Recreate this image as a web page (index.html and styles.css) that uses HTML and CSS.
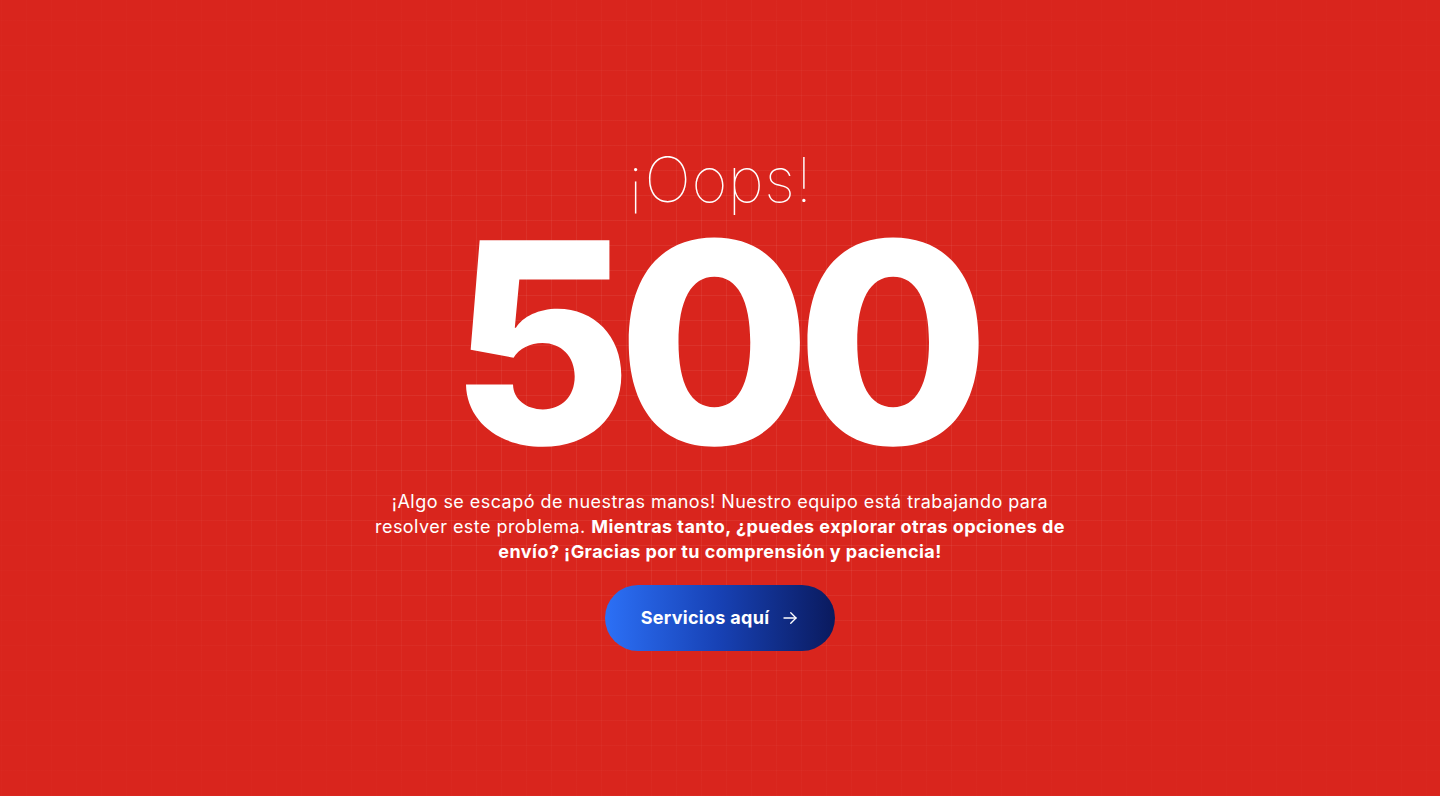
FILE: index.html
```html
<!DOCTYPE html>
<html lang="es">
<head>
<meta charset="utf-8">
<title>Error 500</title>
<link rel="stylesheet" href="styles.css">
</head>
<body>
<main class="page">
  <section class="content">
    <p class="oops">¡Oops!</p>
    <h1 class="code">500</h1>
    <p class="message">¡Algo se escapó de nuestras manos! Nuestro equipo está trabajando para resolver este problema. <strong>Mientras tanto, ¿puedes explorar otras opciones de envío? ¡Gracias por tu comprensión y paciencia!</strong></p>
    <a class="btn" href="#">Servicios aquí
      <svg class="btn-icon" width="18" height="18" viewBox="0 0 24 24" fill="none" stroke="currentColor" stroke-width="1.8" stroke-linecap="round" stroke-linejoin="round"><path d="M4 12h16"/><path d="M13 5l7 7-7 7"/></svg>
    </a>
  </section>
</main>
</body>
</html>
```
FILE: styles.css
```css
* { box-sizing: border-box; }
html, body { margin: 0; padding: 0; height: 100%; }
body {
  font-family: "Inter", "Noto Sans", sans-serif;
  color: #fff;
  background-color: #d9251d;
  background-image:
    radial-gradient(ellipse 50% 55% at 50% 50%, rgba(217,37,29,0) 40%, rgba(217,37,29,0.85) 100%),
    linear-gradient(to right, rgba(255,255,255,0.06) 1px, transparent 1px),
    linear-gradient(to bottom, rgba(255,255,255,0.06) 1px, transparent 1px);
  background-size: 100% 100%, 25px 25px, 25px 25px;
  background-position: 0 0, 1px 20px, 1px 20px;
}
.page {
  min-height: 796px;
  display: flex;
  align-items: center;
  justify-content: center;
  padding-top: 5px;
}
.content {
  display: flex;
  flex-direction: column;
  align-items: center;
  text-align: center;
}
.oops {
  margin: 0;
  font-weight: 100;
  font-size: 62px;
  line-height: 58px;
  letter-spacing: 0.5px;
}
.code {
  margin: 9px 0 0;
  font-weight: 800;
  font-size: 280px;
  line-height: 250px;
  letter-spacing: -15px;
  text-indent: -15px;
}
.message {
  margin: 21px 0 0;
  width: 700px;
  font-size: 18px;
  line-height: 25px;
  font-weight: 400;
  letter-spacing: 0.45px;
}
.message strong { font-weight: 700; }
.btn {
  margin-top: 21px;
  display: flex;
  align-items: center;
  gap: 12px;
  height: 66px;
  padding: 0 36px;
  border-radius: 33px;
  background: linear-gradient(90deg, #2c70f6 0%, #1741b4 50%, #0a1a5e 100%);
  color: #fff;
  text-decoration: none;
  font-weight: 700;
  font-size: 18px;
  letter-spacing: 0.3px;
}
.btn-icon { display: block; }
```
